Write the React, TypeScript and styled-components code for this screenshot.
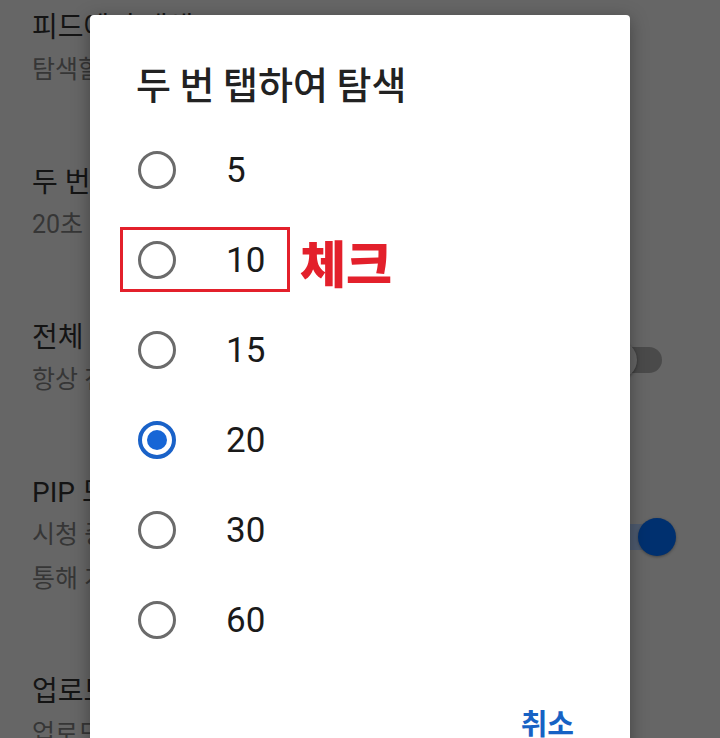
import React from "react";
import styled, { createGlobalStyle } from "styled-components";

const GlobalStyle = createGlobalStyle`
  html, body {
    margin: 0;
    padding: 0;
    overflow: hidden;
  }
  body {
    font-family: Roboto, "Noto Sans CJK KR", sans-serif;
  }
`;

// dimmed settings screen behind the dialog
const Screen = styled.div`
  position: relative;
  width: 720px;
  height: 738px;
  overflow: hidden;
  background: #666666;
`;

const SettingsList = styled.div`
  display: flex;
  flex-direction: column;
  gap: 71px;
  padding-top: 8px;
`;

const SettingRow = styled.div`
  display: flex;
  align-items: center;
  justify-content: space-between;
  padding: 0 44px 0 32px;
`;

const SettingText = styled.div`
  display: flex;
  flex-direction: column;
  white-space: nowrap;
`;

const SettingTitle = styled.div`
  font-family: Roboto, "Noto Sans CJK KR", sans-serif;
  font-size: 28px;
  line-height: 40px;
  color: #141414;
`;

const SettingSub = styled.div`
  font-family: Roboto, "Noto Sans CJK KR", sans-serif;
  font-size: 25px;
  line-height: 44px;
  color: #363636;
`;

const SwitchBox = styled.div<{ $on: boolean }>`
  position: relative;
  width: 77px;
  height: 38px;
  flex-shrink: 0;

  &::before {
    content: "";
    position: absolute;
    left: 6px;
    right: 14px;
    top: 6px;
    height: 26px;
    border-radius: 13px;
    background: ${(p) => (p.$on ? "#4e5b6f" : "#4a4a4a")};
  }

  &::after {
    content: "";
    position: absolute;
    top: 0;
    ${(p) => (p.$on ? "right: 0;" : "left: 0;")}
    width: 38px;
    height: 38px;
    border-radius: 50%;
    background: ${(p) => (p.$on ? "#00306f" : "#656565")};
    box-shadow: 0 1px 3px rgba(0, 0, 0, 0.35);
  }
`;

// dialog
const Dialog = styled.div`
  position: absolute;
  left: 90px;
  top: 15px;
  width: 540px;
  height: 780px;
  background: #ffffff;
  border-radius: 4px;
  box-shadow: 0 4px 18px rgba(0, 0, 0, 0.35);
  display: flex;
  flex-direction: column;
`;

const DialogTitle = styled.h2`
  margin: 0;
  padding: 42px 46px 0;
  font-family: "Noto Sans CJK KR", Roboto, sans-serif;
  font-size: 38px;
  line-height: 52px;
  font-weight: 500;
  color: #222222;
`;

const OptionList = styled.div`
  display: flex;
  flex-direction: column;
  margin-top: 16px;
`;

const OptionRow = styled.div`
  position: relative;
  display: flex;
  align-items: center;
  gap: 50px;
  height: 90px;
  padding-left: 48px;
`;

const Radio = styled.span<{ $checked: boolean }>`
  box-sizing: border-box;
  width: 38px;
  height: 38px;
  border-radius: 50%;
  border: ${(p) => (p.$checked ? "4px solid #1a62c8" : "3px solid #6b6b6b")};
  display: flex;
  align-items: center;
  justify-content: center;

  &::after {
    content: "";
    display: ${(p) => (p.$checked ? "block" : "none")};
    width: 20px;
    height: 20px;
    border-radius: 50%;
    background: #1766d6;
  }
`;

const OptionLabel = styled.span`
  font-family: Roboto, "Noto Sans CJK KR", sans-serif;
  font-size: 35px;
  color: #1a1a1a;
`;

// red annotation drawn over the screenshot
const Highlight = styled.div`
  position: absolute;
  left: 30px;
  top: 12px;
  width: 170px;
  height: 65px;
  box-sizing: border-box;
  border: 3px solid #e3202b;
`;

const Note = styled.span`
  position: absolute;
  left: 210px;
  top: 18px;
  font-family: "Noto Sans CJK KR", sans-serif;
  font-size: 50px;
  line-height: 56px;
  font-weight: 900;
  color: #e3202b;
`;

const Actions = styled.div`
  display: flex;
  justify-content: flex-end;
  padding: 37px 56px 0 0;
`;

const TextButton = styled.button`
  border: none;
  background: none;
  padding: 0;
  font-family: "Noto Sans CJK KR", sans-serif;
  font-size: 29px;
  line-height: 40px;
  font-weight: 700;
  color: #1762c4;
`;

const settings = [
  { title: "피드에서 재생", sub: ["탐색할 때 홈 등의 피드에서 동영상 재생"] },
  { title: "두 번 탭하여 탐색", sub: ["20초"] },
  { title: "전체 화면으로 확대/축소", sub: ["항상 전체 화면으로 확대"], toggle: false },
  {
    title: "PIP 모드",
    sub: ["시청 중인 동영상을 다른 앱을 사용하는 동안 PIP 창을", "통해 계속 시청할 수 있습니다"],
    toggle: true,
  },
  { title: "업로드", sub: ["업로드 화질 지정"] },
];

const options = [5, 10, 15, 20, 30, 60];

export default function App() {
  const selected = 20;
  const marked = 10;

  return (
    <Screen>
      <GlobalStyle />
      <SettingsList>
        {settings.map((s) => (
          <SettingRow key={s.title}>
            <SettingText>
              <SettingTitle>{s.title}</SettingTitle>
              {s.sub.map((line) => (
                <SettingSub key={line}>{line}</SettingSub>
              ))}
            </SettingText>
            {s.toggle !== undefined && <SwitchBox $on={s.toggle} />}
          </SettingRow>
        ))}
      </SettingsList>

      <Dialog>
        <DialogTitle>두 번 탭하여 탐색</DialogTitle>
        <OptionList>
          {options.map((n) => (
            <OptionRow key={n}>
              <Radio $checked={n === selected} />
              <OptionLabel>{n}</OptionLabel>
              {n === marked && (
                <>
                  <Highlight />
                  <Note>체크</Note>
                </>
              )}
            </OptionRow>
          ))}
        </OptionList>
        <Actions>
          <TextButton>취소</TextButton>
        </Actions>
      </Dialog>
    </Screen>
  );
}
